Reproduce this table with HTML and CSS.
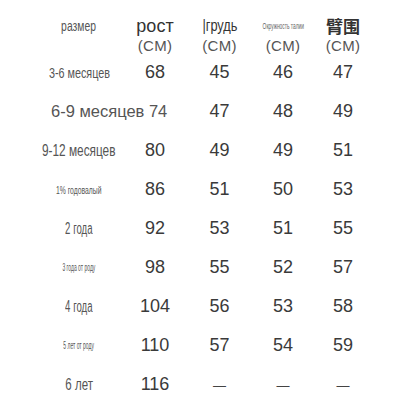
FILE: index.html
```html
<!DOCTYPE html>
<html lang="ru">
<head>
<meta charset="utf-8">
<title>Таблица размеров</title>
<link rel="stylesheet" href="styles.css">
</head>
<body>
<div class="table">
  <div class="cell head label"><span class="sq s-razmer">размер</span></div>
  <div class="cell head"><span class="h1">рост</span><span class="cm">(CM)</span></div>
  <div class="cell head"><span class="h1 sq s-grud">|грудь</span><span class="cm">(CM)</span></div>
  <div class="cell head"><span class="h1 sq s-talia">Окружность талии</span><span class="cm">(CM)</span></div>
  <div class="cell head"><span class="h1 cjk">臂围</span><span class="cm">(CM)</span></div>

  <div class="cell label"><span class="sq s-m15">3-6 месяцев</span></div>
  <div class="cell num">68</div><div class="cell num">45</div><div class="cell num">46</div><div class="cell num">47</div>

  <div class="cell wide">6-9 месяцев 74</div>
  <div class="cell num">47</div><div class="cell num">48</div><div class="cell num">49</div>

  <div class="cell label"><span class="sq s-m15b">9-12 месяцев</span></div>
  <div class="cell num">80</div><div class="cell num">49</div><div class="cell num">49</div><div class="cell num">51</div>

  <div class="cell label"><span class="sq s-tiny">1% годовалый</span></div>
  <div class="cell num">86</div><div class="cell num">51</div><div class="cell num">50</div><div class="cell num">53</div>

  <div class="cell label"><span class="sq s-goda">2 года</span></div>
  <div class="cell num">92</div><div class="cell num">53</div><div class="cell num">51</div><div class="cell num">55</div>

  <div class="cell label"><span class="sq s-tiny2">3 года от роду</span></div>
  <div class="cell num">98</div><div class="cell num">55</div><div class="cell num">52</div><div class="cell num">57</div>

  <div class="cell label"><span class="sq s-goda">4 года</span></div>
  <div class="cell num">104</div><div class="cell num">56</div><div class="cell num">53</div><div class="cell num">58</div>

  <div class="cell label"><span class="sq s-tiny2">5 лет от роду</span></div>
  <div class="cell num">110</div><div class="cell num">57</div><div class="cell num">54</div><div class="cell num">59</div>

  <div class="cell label"><span class="sq s-let">6 лет</span></div>
  <div class="cell num">116</div><div class="cell dash">—</div><div class="cell dash">—</div><div class="cell dash">—</div>
</div>
</body>
</html>
```
FILE: styles.css
```css
html, body {
  margin: 0;
  padding: 0;
  background: #ffffff;
}
body {
  width: 400px;
  height: 400px;
  overflow: hidden;
  font-family: "Liberation Sans", Arial, sans-serif;
  color: #3a3a3a;
}
.table {
  display: grid;
  grid-template-columns: 86px 66px 63px 64px 56px;
  grid-template-rows: 53px repeat(9, 39px);
  padding-left: 36px;
}
.cell {
  display: flex;
  align-items: center;
  justify-content: center;
  white-space: nowrap;
}
.head {
  flex-direction: column;
  justify-content: flex-start;
  padding-top: 16px;
}
.head.label {
  justify-content: flex-start;
}
.h1 {
  display: block;
  height: 20px;
  line-height: 20px;
  font-size: 18px;
  color: #333333;
}
.cm {
  display: block;
  height: 20px;
  line-height: 20px;
  font-size: 15px;
  letter-spacing: 0.3px;
  color: #555555;
}
.cjk {
  font-family: "Noto Sans CJK SC", sans-serif;
  font-weight: 700;
  font-size: 17px;
}
.sq {
  display: inline-block;
  transform-origin: center center;
  color: #555555;
}
.label .sq {
  line-height: 20px;
}
.s-razmer { font-size: 14px; transform: scaleX(0.74); }
.s-grud { font-size: 16px; transform: scaleX(0.8); color: #333333; }
.s-talia { font-size: 9px; transform: scaleX(0.54); color: #666666; }
.s-m15 { font-size: 15px; transform: scaleX(0.72); }
.s-m15b { font-size: 16px; transform: scaleX(0.74); }
.s-tiny { font-size: 11px; transform: scaleX(0.62); }
.s-tiny2 { font-size: 10px; transform: scaleX(0.5); }
.s-goda { font-size: 16px; transform: scaleX(0.6); }
.s-let { font-size: 16px; transform: scaleX(0.72); }
.wide {
  grid-column: span 2;
  justify-content: flex-start;
  padding-left: 15px;
  font-size: 16.5px;
  color: #555555;
}
.num {
  font-size: 18px;
  color: #3a3a3a;
}
.dash {
  font-size: 13px;
  color: #444444;
  padding-top: 2px;
}
```
